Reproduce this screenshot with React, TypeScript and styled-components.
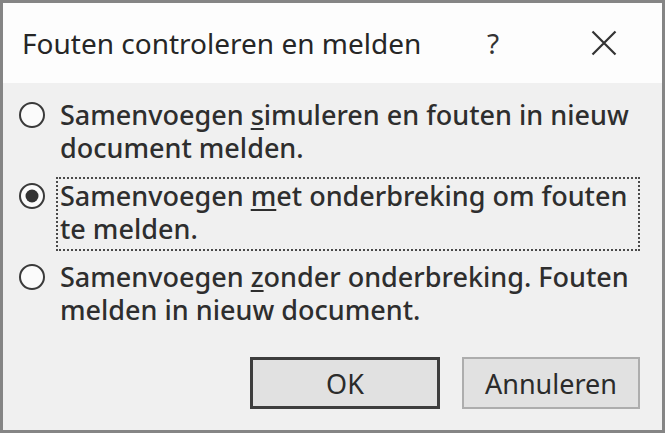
import { createGlobalStyle, styled } from "styled-components";

const GlobalStyle = createGlobalStyle`
  html, body {
    margin: 0;
    padding: 0;
    background: #ffffff;
  }
  * {
    box-sizing: border-box;
  }
`;

const Dialog = styled.div`
  width: 665px;
  height: 433px;
  display: flex;
  flex-direction: column;
  border: 3px solid #858585;
  background: #f0f0f0;
  font-family: "Noto Sans", "Open Sans", sans-serif;
  color: #2b2b2b;
`;

const TitleBar = styled.div`
  height: 80px;
  flex-shrink: 0;
  display: flex;
  align-items: center;
  padding: 0 28px 0 19px;
  background: #fdfdfd;
`;

const Title = styled.h1`
  flex: 1;
  margin: 0;
  font-size: 28px;
  font-weight: 400;
  line-height: 1;
  color: #262626;
`;

const HelpButton = styled.button`
  width: 60px;
  height: 50px;
  margin-right: 51px;
  border: none;
  background: transparent;
  font-family: "Noto Sans", sans-serif;
  font-size: 28px;
  font-weight: 400;
  color: #333;
  padding: 0;
`;

const CloseButton = styled.button`
  width: 60px;
  height: 50px;
  display: flex;
  align-items: center;
  justify-content: center;
  border: none;
  background: transparent;
  padding: 0;
`;

const Body = styled.div`
  flex: 1;
  display: flex;
  flex-direction: column;
  padding: 13px 22px 21px 16px;
`;

const Options = styled.div`
  display: flex;
  flex-direction: column;
  gap: 7px;
`;

const Option = styled.label`
  display: flex;
  align-items: flex-start;
  gap: 11px;
`;

const Radio = styled.span<{ $checked?: boolean }>`
  position: relative;
  flex-shrink: 0;
  width: 26px;
  height: 26px;
  margin-top: 5.5px;
  border: 2.5px solid #3a3a3a;
  border-radius: 50%;
  background: #fbfbfb;

  &::after {
    content: "";
    display: ${(p) => (p.$checked ? "block" : "none")};
    position: absolute;
    left: 50%;
    top: 50%;
    width: 13px;
    height: 13px;
    transform: translate(-50%, -50%);
    border-radius: 50%;
    background: #333;
  }
`;

const Text = styled.span<{ $focused?: boolean }>`
  flex: 1;
  padding: 0 4px 4px 2px;
  border: 2px dotted ${(p) => (p.$focused ? "#4a4a4a" : "transparent")};
  font-size: 27px;
  font-weight: 500;
  line-height: 33px;
  color: #2e2e2e;

  u {
    text-underline-offset: 3px;
    text-decoration-thickness: 2px;
  }
`;

const Footer = styled.div`
  margin-top: auto;
  display: flex;
  justify-content: flex-end;
  gap: 22px;
`;

const Button = styled.button<{ $primary?: boolean; $width: number }>`
  width: ${(p) => p.$width}px;
  height: 52px;
  border: ${(p) => (p.$primary ? "3px solid #3d3d3d" : "2px solid #adadad")};
  background: #e1e1e1;
  font-family: "Noto Sans", sans-serif;
  font-size: 27px;
  font-weight: 400;
  color: #2b2b2b;
  padding: 0;
`;

const options = [
  {
    key: "simulate",
    checked: false,
    content: (
      <>
        Samenvoegen <u>s</u>imuleren en fouten in nieuw document melden.
      </>
    ),
  },
  {
    key: "pause",
    checked: true,
    content: (
      <>
        Samenvoegen <u>m</u>et onderbreking om fouten te melden.
      </>
    ),
  },
  {
    key: "continue",
    checked: false,
    content: (
      <>
        Samenvoegen <u>z</u>onder onderbreking. Fouten melden in nieuw document.
      </>
    ),
  },
];

const App = () => {
  return (
    <>
      <GlobalStyle />
      <Dialog>
        <TitleBar>
          <Title>Fouten controleren en melden</Title>
          <HelpButton>?</HelpButton>
          <CloseButton aria-label="Sluiten">
            <svg width="26" height="26" viewBox="0 0 26 26">
              <path d="M1.5 1.5 L24.5 24.5 M24.5 1.5 L1.5 24.5" stroke="#333" strokeWidth="2.2" />
            </svg>
          </CloseButton>
        </TitleBar>
        <Body>
          <Options>
            {options.map((o) => (
              <Option key={o.key}>
                <Radio $checked={o.checked} />
                <Text $focused={o.checked}>{o.content}</Text>
              </Option>
            ))}
          </Options>
          <Footer>
            <Button $primary $width={190}>OK</Button>
            <Button $width={178}>Annuleren</Button>
          </Footer>
        </Body>
      </Dialog>
    </>
  );
};

export default App;
